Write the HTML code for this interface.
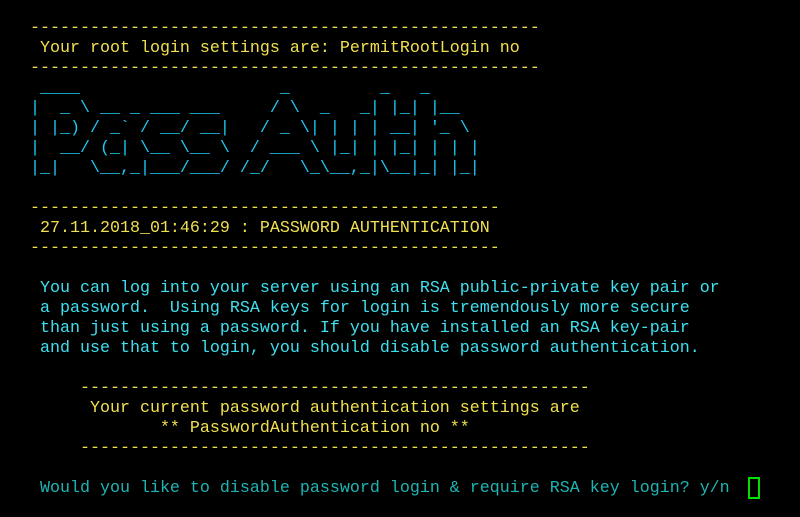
<!DOCTYPE html>
<html><head><meta charset="utf-8"><style>
html,body{margin:0;padding:0;background:#000;width:800px;height:517px;overflow:hidden}
pre{position:absolute;left:30px;top:19px;margin:0;font-family:"Liberation Mono",monospace;font-size:16.67px;line-height:20px;color:#f0e050;white-space:pre}
.y{color:#f0e050}.c{color:#1ec8f0}.p{color:#3ee0f0}.t{color:#1eb4b4}
.cur{position:absolute;left:748px;top:477px;width:8px;height:18px;border:2px solid #00e000}
</style></head><body>
<pre><span class="y">---------------------------------------------------
 Your root login settings are: PermitRootLogin no
---------------------------------------------------</span>
<span class="c"> ____                    _         _   _     
|  _ \ __ _ ___ ___     / \  _   _| |_| |__  
| |_) / _` / __/ __|   / _ \| | | | __| '_ \ 
|  __/ (_| \__ \__ \  / ___ \ |_| | |_| | | |
|_|   \__,_|___/___/ /_/   \_\__,_|\__|_| |_|</span>

<span class="y">-----------------------------------------------
 27.11.2018_01:46:29 : PASSWORD AUTHENTICATION
-----------------------------------------------</span>

<span class="p"> You can log into your server using an RSA public-private key pair or
 a password.  Using RSA keys for login is tremendously more secure
 than just using a password. If you have installed an RSA key-pair
 and use that to login, you should disable password authentication.</span>

<span class="y">     ---------------------------------------------------
      Your current password authentication settings are
             ** PasswordAuthentication no **
     ---------------------------------------------------</span>

<span class="t"> Would you like to disable password login &amp; require RSA key login? y/n</span></pre>
<div class="cur"></div>
</body></html>
